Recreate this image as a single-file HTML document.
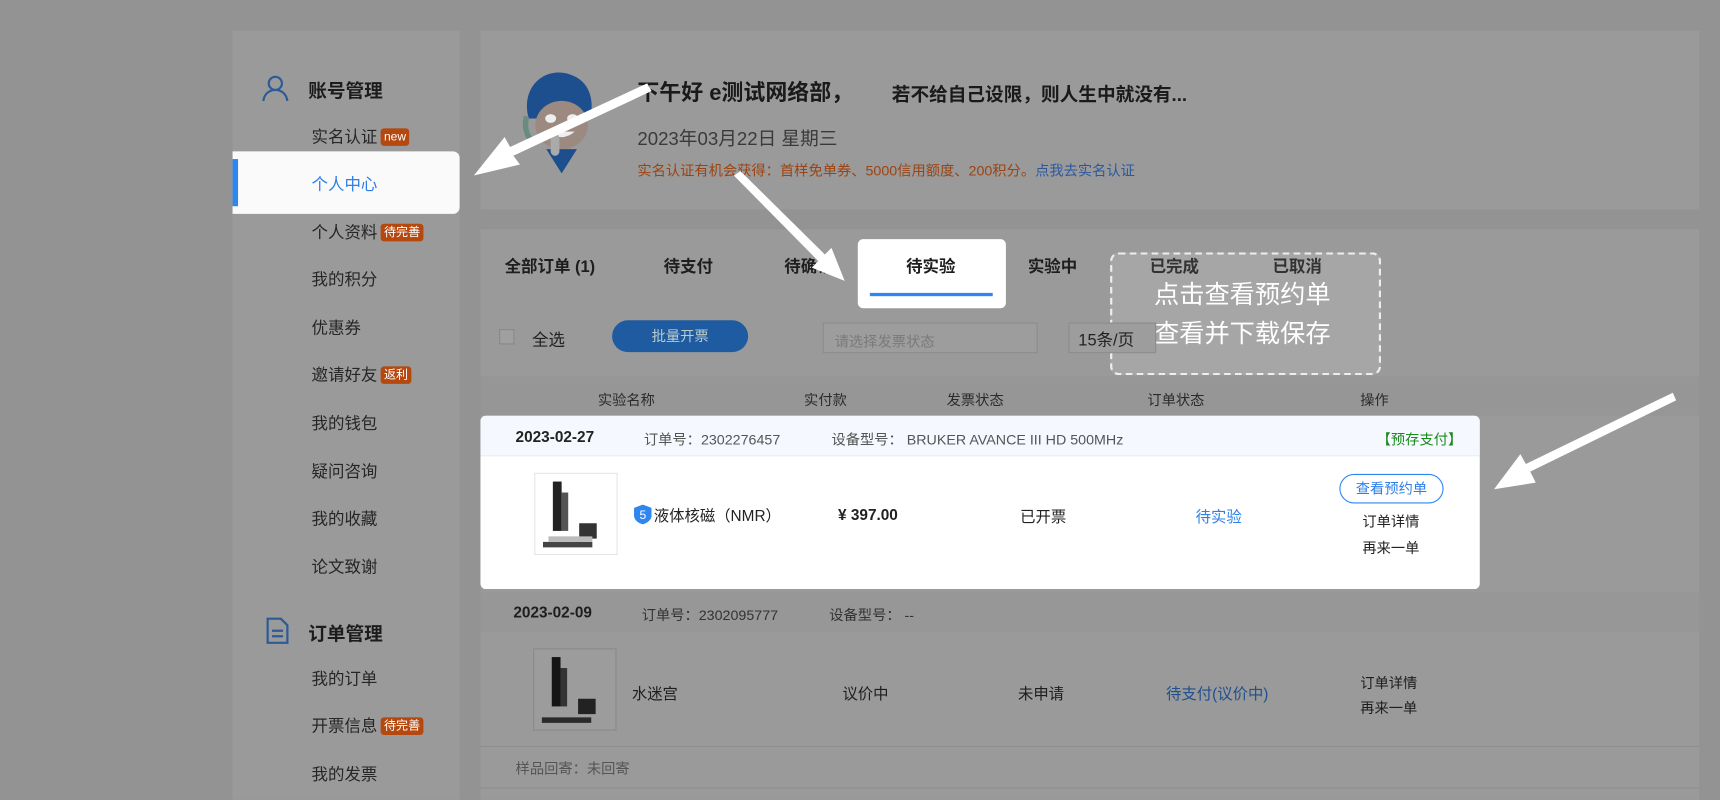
<!DOCTYPE html>
<html><head><meta charset="utf-8"><style>
*{margin:0;padding:0;box-sizing:border-box}
body{width:1720px;height:800px;overflow:hidden;background:#939393;font-family:"Liberation Sans","Noto Sans CJK SC",sans-serif}
#w{position:absolute;left:0;top:0;width:1568px;height:729px;transform:scale(1.09694);transform-origin:0 0}
.a{position:absolute;white-space:nowrap}
.p{position:absolute;background:#9a9a9a}
.si{position:absolute;left:284px;font-size:15px;color:#262626}
.bd{display:inline-block;font-size:11px;color:#fff;background:#b5480f;border-radius:3px;padding:0 3px;line-height:16px;margin-left:3px;vertical-align:2px}
.tab{position:absolute;top:232px;font-size:15px;font-weight:bold;color:#1e1e1e}
.th{position:absolute;top:354px;font-size:13px;color:#2b2b2b}
</style></head><body><div id="w">
<div class="p" style="left:212px;top:28px;width:207px;height:701px"></div>
<div class="p" style="left:438px;top:28px;width:1111px;height:163px"></div>
<div class="p" style="left:438px;top:209px;width:1111px;height:520px"></div>

<!-- sidebar -->
<svg class="a" style="left:238px;top:67px" width="26" height="26" viewBox="0 0 26 26" fill="none" stroke="#2c5a96" stroke-width="2"><circle cx="13" cy="9" r="6"/><path d="M2 25c1-7 6-10 11-10s10 3 11 10"/></svg>
<div class="a" style="left:281px;top:69px;font-size:17px;font-weight:bold;color:#1c1c1c">账号管理</div>
<div class="si" style="top:114px">实名认证<span class="bd">new</span></div>
<div class="a" style="left:212px;top:138px;width:207px;height:57px;background:#fafafa;border-radius:0 6px 6px 0"></div>
<div class="a" style="left:212px;top:145px;width:5px;height:43px;background:#2e86f0"></div>
<div class="si" style="top:157px;color:#2e7fe8">个人中心</div>
<div class="si" style="top:201px">个人资料<span class="bd">待完善</span></div>
<div class="si" style="top:244px">我的积分</div>
<div class="si" style="top:288px">优惠券</div>
<div class="si" style="top:331px">邀请好友<span class="bd">返利</span></div>
<div class="si" style="top:375px">我的钱包</div>
<div class="si" style="top:419px">疑问咨询</div>
<div class="si" style="top:462px">我的收藏</div>
<div class="si" style="top:506px">论文致谢</div>
<svg class="a" style="left:242px;top:562px" width="22" height="26" viewBox="0 0 22 26" fill="none" stroke="#2c5a96" stroke-width="2"><path d="M2 2h12l6 6v16H2z"/><path d="M6 13h10M6 18h10"/></svg>
<div class="a" style="left:281px;top:564px;font-size:17px;font-weight:bold;color:#1c1c1c">订单管理</div>
<div class="si" style="top:608px">我的订单</div>
<div class="si" style="top:651px">开票信息<span class="bd">待完善</span></div>
<div class="si" style="top:695px">我的发票</div>

<!-- header mascot -->
<svg class="a" style="left:470px;top:58px" width="90" height="100" viewBox="0 0 90 100">
<path d="M12 50C4 20 28 2 50 10c18 6 22 24 18 40z" fill="#1d4f8f"/>
<ellipse cx="42" cy="56" rx="24" ry="22" fill="#9c8a80"/>
<ellipse cx="32" cy="50" rx="5" ry="4" fill="#eee"/><ellipse cx="52" cy="50" rx="5" ry="4" fill="#eee"/>
<path d="M30 62q12 10 24 0z" fill="#eee"/>
<path d="M10 48c-3 12 2 22 8 24" stroke="#6a8c80" stroke-width="5" fill="none"/>
<path d="M28 78l14 22 14-22z" fill="#1d4f8f"/>
<rect x="32" y="64" width="8" height="20" rx="4" fill="#aaa"/>
</svg>
<div class="a" style="left:581px;top:68px;font-size:20px;font-weight:bold;color:#1a1a1a">下午好 e测试网络部，</div>
<div class="a" style="left:813px;top:72px;font-size:17px;font-weight:bold;color:#1a1a1a">若不给自己设限，则人生中就没有...</div>
<div class="a" style="left:581px;top:112px;font-size:17px;color:#3a3a3a">2023年03月22日 星期三</div>
<div class="a" style="left:581px;top:145px;font-size:13px;color:#9c4312">实名认证有机会获得：首样免单券、5000信用额度、200积分。<span style="color:#2a58a0">点我去实名认证</span></div>

<!-- tabs -->
<div class="tab" style="left:460px">全部订单 (1)</div>
<div class="tab" style="left:605px">待支付</div>
<div class="tab" style="left:715px">待确认</div>
<div class="a" style="left:782px;top:218px;width:135px;height:63px;background:#fff;border-radius:5px"></div>
<div class="tab" style="left:826px">待实验</div>
<div class="a" style="left:793px;top:267px;width:112px;height:3px;background:#2e86f0"></div>
<div class="tab" style="left:937px">实验中</div>
<div class="a" style="left:1012px;top:230px;width:247px;height:112px;border:2px dashed #eee;border-radius:8px;background:#a6a6a6"></div>
<div class="tab" style="left:1048px;color:#333">已完成</div>
<div class="tab" style="left:1160px;color:#333">已取消</div>
<div class="a" style="left:1009px;top:250px;width:247px;text-align:center;font-size:23px;color:#fff;line-height:36px">点击查看预约单<br>查看并下载保存</div>

<div class="a" style="left:455px;top:300px;width:14px;height:14px;border:1px solid #888;background:#a0a0a0"></div>
<div class="a" style="left:485px;top:299px;font-size:15px;color:#222">全选</div>
<div class="a" style="left:558px;top:292px;width:124px;height:29px;border-radius:15px;background:#1f5ba0;color:#bcc;font-size:13px;text-align:center;line-height:29px">批量开票</div>
<div class="a" style="left:750px;top:294px;width:196px;height:28px;border:1px solid #8c8c8c;background:#9d9d9d;font-size:13px;color:#7a7a7a;padding:6px 10px">请选择发票状态</div>
<div class="a" style="left:974px;top:294px;height:28px;border:1px solid #8c8c8c;background:#9d9d9d;font-size:15px;color:#222;padding:4px 8px;width:80px">15条/页</div>

<div class="a" style="left:438px;top:343px;width:1111px;height:36px;background:#969696"></div>
<div class="th" style="left:545px">实验名称</div>
<div class="th" style="left:733px">实付款</div>
<div class="th" style="left:863px">发票状态</div>
<div class="th" style="left:1046px">订单状态</div>
<div class="th" style="left:1240px">操作</div>

<!-- card -->
<div class="a" style="left:438px;top:379px;width:911px;height:158px;background:#fff;border-radius:5px;overflow:hidden">
 <div style="height:37px;background:#f5f9ff;border-bottom:1px solid #e8eef7"></div>
</div>
<div class="a" style="left:470px;top:390px;font-size:14px;font-weight:bold;color:#222">2023-02-27</div>
<div class="a" style="left:587px;top:390px;font-size:13px;color:#555">订单号：2302276457</div>
<div class="a" style="left:758px;top:390px;font-size:13px;color:#555">设备型号： BRUKER AVANCE III HD 500MHz</div>
<div class="a" style="left:1255px;top:390px;font-size:13px;color:#1a8a1a">【预存支付】</div>
<div class="a" style="left:487px;top:431px;width:76px;height:75px;border:1px solid #e5e5e5;background:#fff"></div>
<svg class="a" style="left:490px;top:434px" width="70" height="70" viewBox="0 0 70 70"><rect x="14" y="5" width="8" height="45" fill="#222"/><rect x="22" y="15" width="6" height="35" fill="#555"/><rect x="38" y="43" width="16" height="14" fill="#333"/><path d="M5 60h45v5H5z" fill="#444"/><path d="M10 55h40v5H10z" fill="#bbb"/></svg>
<svg class="a" style="left:578px;top:460px" width="16" height="18" viewBox="0 0 16 18"><path d="M8 0l8 3v7c0 4-4 7-8 8-4-1-8-4-8-8V3z" fill="#2e86f0"/><text x="8" y="13" font-size="11" fill="#fff" text-anchor="middle" font-family="Liberation Sans">5</text></svg>
<div class="a" style="left:596px;top:460px;font-size:14px;color:#222">液体核磁（NMR）</div>
<div class="a" style="left:764px;top:461px;font-size:14px;font-weight:bold;color:#222">¥ 397.00</div>
<div class="a" style="left:930px;top:461px;font-size:14px;color:#222">已开票</div>
<div class="a" style="left:1090px;top:461px;font-size:14px;color:#2e7fe8">待实验</div>
<div class="a" style="left:1221px;top:432px;width:95px;height:27px;border:1px solid #2e86f0;border-radius:14px;font-size:13px;color:#2e7fe8;text-align:center;line-height:25px">查看预约单</div>
<div class="a" style="left:1242px;top:465px;font-size:13px;color:#222">订单详情</div>
<div class="a" style="left:1242px;top:489px;font-size:13px;color:#222">再来一单</div>

<!-- second order -->
<div class="a" style="left:438px;top:540px;width:1111px;height:36px;background:#979797"></div>
<div class="a" style="left:468px;top:550px;font-size:14px;font-weight:bold;color:#1e1e1e">2023-02-09</div>
<div class="a" style="left:585px;top:550px;font-size:13px;color:#333">订单号：2302095777</div>
<div class="a" style="left:756px;top:550px;font-size:13px;color:#333">设备型号： --</div>
<div class="a" style="left:486px;top:591px;width:76px;height:75px;border:1px solid #8a8a8a;background:#9c9c9c"></div>
<svg class="a" style="left:489px;top:594px" width="70" height="70" viewBox="0 0 70 70"><rect x="14" y="5" width="8" height="45" fill="#151515"/><rect x="22" y="15" width="6" height="35" fill="#333"/><rect x="38" y="43" width="16" height="14" fill="#222"/><path d="M5 60h45v5H5z" fill="#2a2a2a"/></svg>
<div class="a" style="left:576px;top:622px;font-size:14px;color:#1e1e1e">水迷宫</div>
<div class="a" style="left:768px;top:622px;font-size:14px;color:#1e1e1e">议价中</div>
<div class="a" style="left:928px;top:622px;font-size:14px;color:#1e1e1e">未申请</div>
<div class="a" style="left:1063px;top:622px;font-size:14px;color:#1f4f8f">待支付(议价中)</div>
<div class="a" style="left:1240px;top:612px;font-size:13px;color:#1e1e1e">订单详情</div>
<div class="a" style="left:1240px;top:635px;font-size:13px;color:#1e1e1e">再来一单</div>
<div class="a" style="left:438px;top:680px;width:1111px;height:1px;background:#8e8e8e"></div>
<div class="a" style="left:470px;top:690px;font-size:13px;color:#555">样品回寄：未回寄</div>
<div class="a" style="left:438px;top:718px;width:1111px;height:1px;background:#8e8e8e"></div>

<!-- arrows -->
<svg class="a" style="left:0;top:0" width="1568" height="729">
<g fill="#fff">
<polygon points="590,76 594,83 468,142 474,150 432,160 460,125 465,134"/>
<polygon points="669,160 675,156 752,232 758,226 770,256 740,244 746,238"/>
<polygon points="1525,358 1528,365 1395,430 1400,440 1362,446 1386,414 1391,423"/>
</g></svg>
</div></body></html>
